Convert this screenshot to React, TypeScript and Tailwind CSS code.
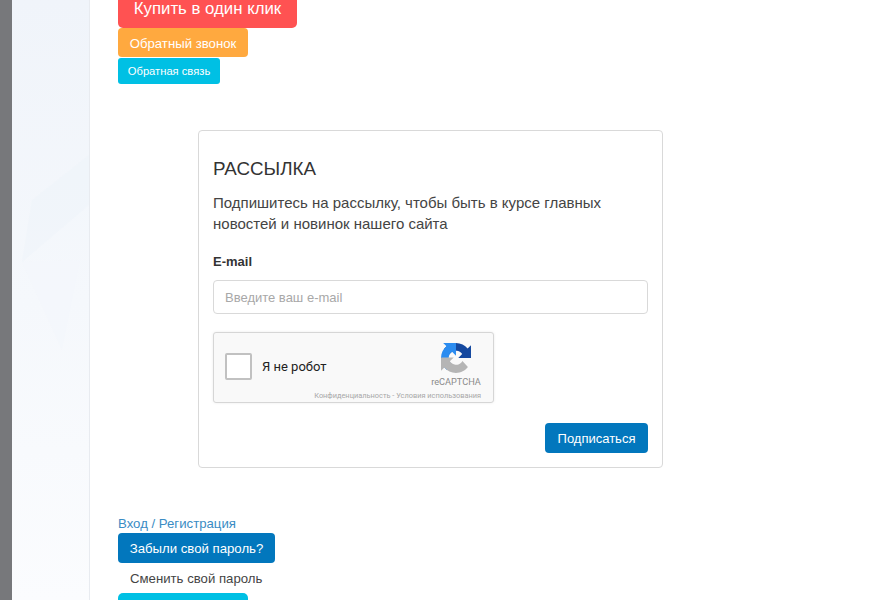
import React from "react";

function RecaptchaLogo() {
  return (
    <svg viewBox="0 0 64 64" className="h-[30px] w-[30px]">
      <path d="M64 31.955l-.033-1.37V4.687l-7.16 7.16C50.948 4.674 42.033.093 32.05.093c-10.4 0-19.622 4.96-25.458 12.64l11.734 11.857c1.15-2.127 2.784-3.955 4.755-5.334 2.05-1.6 4.952-2.908 9-2.908.49 0 .867.057 1.146.164 5.027.397 9.385 3.17 11.95 7.196l-8.305 8.305 26.127.023" fill="#14489f" />
      <path d="M31.9.002l-1.37.033H4.63l7.16 7.16C4.616 13.054.035 21.97.035 31.95c0 10.4 4.96 19.622 12.64 25.458L24.53 45.675c-2.127-1.15-3.955-2.784-5.334-4.755-1.6-2.05-2.908-4.952-2.908-9 0-.49.057-.867.164-1.146.397-5.027 3.17-9.385 7.196-11.95l8.305 8.305.023-26.127" fill="#2b8cf0" />
      <path d="M.002 31.95l.033 1.37v25.9l7.16-7.16c5.86 7.173 14.774 11.754 24.76 11.754 10.4 0 19.622-4.96 25.458-12.64L45.68 38.316c-1.15 2.127-2.784 3.955-4.755 5.334-2.05 1.6-4.952 2.908-9 2.908-.49 0-.867-.057-1.146-.164-5.027-.397-9.385-3.17-11.95-7.196l8.305-8.305-26.127-.023" fill="#b5b5b5" />
    </svg>
  );
}

export default function App() {
  return (
    <div className="flex h-[600px] w-[893px] overflow-hidden bg-white font-['Liberation_Sans',Arial,sans-serif] text-[#333]">
      <div className="w-[12px] shrink-0 bg-[#77787b]" />
      <div className="relative w-[78px] shrink-0 border-r border-[#e8ebf0] bg-gradient-to-b from-[#f0f4fa] via-[#f5f8fc] to-[#fbfcfe]">
        <svg viewBox="0 0 77 600" className="absolute inset-0 h-full w-full">
          <polygon points="20,200 77,155 77,205 10,262" fill="#eef3f9" opacity="0.5" />
          <polygon points="10,262 68,260 50,350" fill="#f3f6fb" opacity="0.6" />
        </svg>
      </div>
      <div className="-mt-[12px] flex min-w-0 flex-1 flex-col items-start pl-[28px]">
        <a className="flex h-[40px] w-[179px] shrink-0 items-center justify-center rounded-[5px] bg-[#ff5252] pt-[2px] text-[16.8px] leading-[16px] text-white">
          Купить в один клик
        </a>
        <a className="flex h-[29px] w-[130px] shrink-0 items-center justify-center rounded-[4px] bg-[#ffa93f] pt-[2px] text-[13.2px] text-white">
          Обратный звонок
        </a>
        <a className="mt-px flex h-[26px] w-[102px] shrink-0 items-center justify-center rounded-[3px] bg-[#00c0e4] text-[11.2px] text-white">
          Обратная связь
        </a>
        <section className="ml-[80px] mt-[46px] flex h-[338px] w-[465px] shrink-0 flex-col rounded-[4px] border border-[#d9d9d9] bg-white px-[14px]">
          <h2 className="mt-[27px] text-[18.8px] leading-[22px] text-[#333]">РАССЫЛКА</h2>
          <p className="mt-[12px] text-[15px] leading-[21px] text-[#444]">
            Подпишитесь на рассылку, чтобы быть в курсе главных
            <br />
            новостей и новинок нашего сайта
          </p>
          <label className="mt-[20px] text-[13px] font-bold leading-[16px] text-[#333]">E-mail</label>
          <div className="mt-[10px] flex h-[34px] w-[435px] shrink-0 items-center rounded-[4px] border border-[#d9d9d9] px-[11px] pt-[1px] text-[13px] text-[#a8a8a8]">
            Введите ваш e-mail
          </div>
          <div className="mt-[18px] flex h-[71px] w-[281px] shrink-0 flex-col rounded-[3px] border border-[#d6d6d6] bg-[#f9f9f9] shadow-[0_0_3px_rgba(0,0,0,0.08)]">
            <div className="flex flex-1 items-center pl-[11px] pr-[7px]">
              <div className="mt-[9px] h-[27px] w-[27px] rounded-[2px] border-2 border-[#c1c1c1] bg-white" />
              <span className="ml-[10px] mt-[9px] font-['Roboto',sans-serif] text-[13px] text-[#222]">Я не робот</span>
              <div className="ml-auto mt-[5px] flex w-[60px] flex-col items-center">
                <RecaptchaLogo />
                <span className="mt-[3px] font-['Roboto',sans-serif] text-[9.2px] leading-[11px] text-[#8a8a8a]">reCAPTCHA</span>
              </div>
            </div>
            <div className="pb-[1px] pr-[12px] text-right font-['Roboto',sans-serif] text-[7.4px] leading-[10px] text-[#a8a8a8]">
              Конфиденциальность - Условия использования
            </div>
          </div>
          <div className="mt-[20px] flex w-[435px] justify-end">
            <button className="h-[30px] w-[103px] rounded-[4px] bg-[#0277bd] pt-[2px] text-[13px] text-white">Подписаться</button>
          </div>
        </section>
        <a className="mt-[48px] text-[13.2px] leading-[16px] text-[#3a8cc4]">Вход / Регистрация</a>
        <button className="mt-px h-[30px] w-[157px] shrink-0 rounded-[4px] bg-[#0277bd] pt-[2px] text-[13.2px] text-white">Забыли свой пароль?</button>
        <a className="ml-[12px] mt-[8px] text-[13.2px] leading-[16px] text-[#444]">Сменить свой пароль</a>
        <div className="mt-[6px] h-[20px] w-[130px] shrink-0 rounded-t-[5px] bg-[#00c0e4]" />
      </div>
    </div>
  );
}
